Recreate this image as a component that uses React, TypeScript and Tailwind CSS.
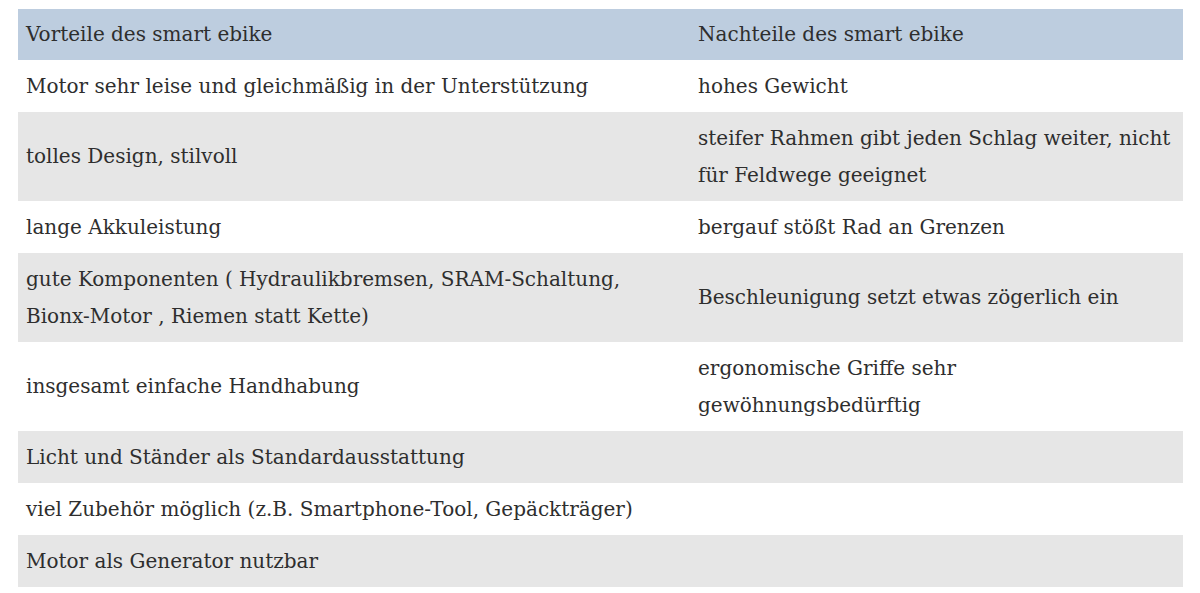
import React from 'react';

const rows: [string, string][] = [
  ['Motor sehr leise und gleichmäßig in der Unterstützung', 'hohes Gewicht'],
  ['tolles Design, stilvoll', 'steifer Rahmen gibt jeden Schlag weiter, nicht für Feldwege geeignet'],
  ['lange Akkuleistung', 'bergauf stößt Rad an Grenzen'],
  ['gute Komponenten ( Hydraulikbremsen, SRAM-Schaltung, Bionx-Motor , Riemen statt Kette)', 'Beschleunigung setzt etwas zögerlich ein'],
  ['insgesamt einfache Handhabung', 'ergonomische Griffe sehr gewöhnungsbedürftig'],
  ['Licht und Ständer als Standardausstattung', ''],
  ['viel Zubehör möglich (z.B. Smartphone-Tool, Gepäckträger)', ''],
  ['Motor als Generator nutzbar', ''],
];

export default function App() {
  return (
    <div className="bg-white w-[1200px] h-[593px] pt-[9px] pl-[18px] font-['DejaVu_Serif',serif] text-[20px] text-[#2e2e2e]">
      <table className="w-[1165px] border-collapse">
        <thead>
          <tr className="bg-[#bdcddf]">
            <th className="w-[672px] px-2 py-[8px] leading-[35px] text-left font-normal">Vorteile des smart ebike</th>
            <th className="px-2 py-[8px] leading-[35px] text-left font-normal">Nachteile des smart ebike</th>
          </tr>
        </thead>
        <tbody>
          {rows.map(([a, b], i) => (
            <tr key={i} className={i % 2 === 0 ? 'bg-white' : 'bg-[#e6e6e6]'}>
              <td className="px-2 py-[7.5px] leading-[37px] align-middle">{a}</td>
              <td className="px-2 py-[7.5px] leading-[37px] align-middle">{b}</td>
            </tr>
          ))}
        </tbody>
      </table>
    </div>
  );
}
